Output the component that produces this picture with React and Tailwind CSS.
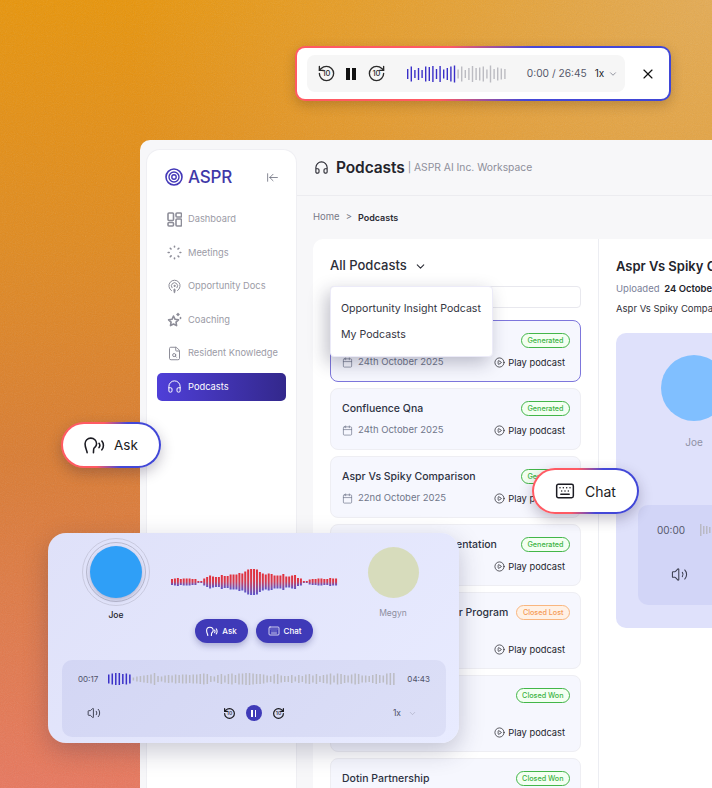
import React from "react";
import { Headphones, Calendar, CirclePlay, Volume2, Keyboard, ChevronDown, X, Podcast, FileSearch, ArrowLeftToLine } from "lucide-react";

function Skip({ size = 20, fwd = false, className = "", sw = 1.7 }) {
  return (
    <svg width={size} height={size} viewBox="0 0 24 24" fill="none" stroke="currentColor" strokeWidth={sw} strokeLinecap="round" strokeLinejoin="round" className={className}>
      <g transform={fwd ? "translate(24 0) scale(-1 1)" : undefined}>
        <path d="M3 12a9 9 0 1 0 9-9 9.75 9.75 0 0 0-6.74 2.74L3 8" />
        <path d="M3 3v5h5" />
      </g>
      <text x="12" y="15.5" textAnchor="middle" fontSize="9.500" fontWeight="500" fontFamily="Inter, sans-serif" fill="currentColor" stroke="none">10</text>
    </svg>
  );
}

function Bars({ heights, pitch, barW = 1.5, played = 0, playedColor = "#3a30c8", color = "#bcbcc2", h, fill }) {
  const w = heights.length * pitch;
  return (
    <svg width={w} height={h} viewBox={`0 0 ${w} ${h}`} className="block shrink-0">
      <defs>
        <linearGradient id="redblue" x1="0" y1="0" x2="0" y2="1">
          <stop offset="0" stopColor="#e2303c" />
          <stop offset="0.45" stopColor="#d83a4c" />
          <stop offset="1" stopColor="#5a56cc" />
        </linearGradient>
      </defs>
      {heights.map((v, i) => (
        <rect key={i} x={i * pitch} y={(h - v) / 2} width={barW} height={v} fill={fill || (i < played ? playedColor : color)} />
      ))}
    </svg>
  );
}

const DashIcon = (p) => (
  <svg width="15" height="15" viewBox="0 0 15 15" fill="none" stroke="currentColor" strokeWidth="1.300" {...p}>
    <rect x="1" y="1" width="5.500" height="7.500" rx="1" />
    <rect x="9" y="1" width="5.500" height="4" rx="1" />
    <rect x="1" y="10.500" width="5.500" height="3.500" rx="1" />
    <rect x="9" y="7" width="5.500" height="7" rx="1" />
  </svg>
);
const MeetIcon = (p) => (
  <svg width="15" height="15" viewBox="0 0 15 15" fill="none" stroke="currentColor" strokeWidth="1.700" strokeLinecap="round" {...p}>
    <path d="M7.500 1.200v.8M7.500 13v.8M1.200 7.500h1M13 7.500h.8M3.300 3.300l.7.7M11.100 11.100l.7.700M3.300 11.700l.8-.8M11 4l.8-.7" />
  </svg>
);
const CoachIcon = (p) => (
  <svg width="15" height="15" viewBox="0 0 15 15" fill="none" stroke="currentColor" strokeWidth="1.200" strokeLinejoin="round" strokeLinecap="round" {...p}>
    <path d="M6.500 4l1.600 3.300 3.400.5-2.500 2.400.6 3.400-3.100-1.600-3 1.600.6-3.400L1.600 7.800 5 7.300z" />
    <path d="M11 1.500v2M10 2.500h2M13.500 5.500v1" />
  </svg>
);

const HeadWave = ({ size = 20, sw = 1.500 }) => (
  <svg width={size} height={size * 0.85} viewBox="0 0 20 17" fill="none" stroke="currentColor" strokeWidth={sw} strokeLinecap="round" strokeLinejoin="round">
    <path d="M3 16c0-2.500-2-4-2-8.500a5.500 5.500 0 0 1 11 0c0 2.500-1.500 3-2.400 4-.7.800-.4 2.500-.6 4.500" />
    <path d="M14.300 7c.5.600.8 1.200.8 2s-.3 1.400-.8 2" />
    <path d="M17 4.800c1 1.200 1.500 2.600 1.500 4.200s-.5 3-1.500 4.200" />
  </svg>
);

const topWave = [10, 15, 8, 12, 8, 15, 14, 16, 10, 16, 9, 12, 15, 17, 9, 15, 8, 12, 16, 12, 13, 15, 9, 17, 10, 13, 11, 10];
const midWave = [6, 7, 8, 6, 7, 7, 7, 6, 6, 2, 2, 7, 10, 13, 11, 10, 10, 14, 12, 12, 15, 15, 15, 18, 17, 21, 25, 26, 26, 25, 20, 17, 15, 17, 16, 13, 13, 13, 16, 11, 11, 13, 14, 8, 7, 2, 2, 5, 6, 6, 7, 7, 6, 6, 8, 7, 7];
const lowWave = [9, 11, 12, 12, 10, 11, 9, 3, 5, 6, 7, 8, 9, 12, 6, 5, 7, 8, 7, 9, 8, 9, 9, 8, 9, 9, 10, 11, 10, 6, 5, 8, 10, 7, 10, 11, 8, 11, 11, 12, 12, 11, 10, 10, 9, 7, 6, 9, 10, 7, 6, 6, 8, 5, 8, 6, 9, 10, 7, 10, 6, 8, 9, 11, 7, 11, 10, 8, 7, 9, 11, 10, 7, 7, 6, 8, 10, 8, 7, 11, 12, 12];

function GradientFrame({ className = "", innerClassName = "", children }) {
  return (
    <div className={`p-[2px] bg-[linear-gradient(100deg,#ff5a63_0%,#ff5a63_40%,#4548d8_62%,#3f46d6_100%)] ${className}`}>
      <div className={`h-full bg-white ${innerClassName}`}>{children}</div>
    </div>
  );
}

function NavItem({ icon: Icon, label, active }) {
  return (
    <div className={`flex items-center h-[28px] px-[10px] gap-[6px] rounded-[5px] text-[9.3px] whitespace-nowrap ${active ? "bg-[linear-gradient(90deg,#4f3fd8,#33288c)] text-white" : "text-[#9b9ba6]"}`}>
      <Icon size={15} strokeWidth={1.6} className={`shrink-0 ${active ? "text-white" : "text-[#8d8d98]"}`} />
      <span>{label}</span>
    </div>
  );
}

function Badge({ label, tone }) {
  const tones = {
    green: "border-[#43b649] bg-[#f3fff2] text-[#3bb342]",
    orange: "border-[#f9b67f] bg-[#fff1e5] text-[#f59a55]",
  };
  return (
    <span className={`flex items-center justify-center h-[15px] px-[5.5px] rounded-full border text-[7.2px] leading-none font-medium whitespace-nowrap ${tones[tone]}`}>
      {label}
    </span>
  );
}

function PodcastCard({ title, date, badge = "Generated", tone = "green", tall, selected }) {
  return (
    <div className={`relative shrink-0 pl-[11px] pr-[10px] pt-[12px] rounded-[8px] bg-[#f6f7fe] ${tall ? "h-[77px]" : "h-[62px]"} ${selected ? "border border-[#7d76dc]" : "border border-[#eeeef3]"}`}>
      <div className="flex items-center justify-between h-[15px]">
        <span className="text-[10.5px] font-medium text-[#2d3242] whitespace-nowrap">{title}</span>
        <Badge label={badge} tone={tone} />
      </div>
      <div className={`flex justify-between ${tall ? "mt-[22px]" : "mt-[7px]"}`}>
        <div className="flex items-center gap-[5px] text-[9.5px] text-[#70768a] h-[15px] whitespace-nowrap">
          {date && <Calendar size={11} strokeWidth={1.5} />}
          {date && <span>{date}</span>}
        </div>
        <div className="flex items-center gap-[3px] text-[9.3px] text-[#23242b] mr-[5px] whitespace-nowrap">
          <CirclePlay size={11} strokeWidth={1.6} />
          <span>Play podcast</span>
        </div>
      </div>
    </div>
  );
}

export default function App() {
  return (
    <div className="relative w-[712px] h-[788px] overflow-hidden pl-[140px] pt-[140px] [font-family:Inter,sans-serif] bg-[radial-gradient(circle_at_100%_0%,#e4ab54_0%,rgba(228,171,84,0)_55%),linear-gradient(180deg,#e8950a_0%,#e08a20_32%,#da7c32_58%,#e07a48_78%,#e8775e_100%)]">
      <svg className="absolute inset-0 opacity-[0.14] pointer-events-none" width="712" height="788">
        <filter id="grain"><feTurbulence type="fractalNoise" baseFrequency="0.9" numOctaves="2" /><feColorMatrix type="saturate" values="0" /></filter>
        <rect width="712" height="788" filter="url(#grain)" />
      </svg>

      {/* App window */}
      <div className="relative flex w-[572px] h-[648px] rounded-tl-[10px] bg-[#f7f7f9] overflow-hidden">
        <aside className="ml-[6px] mt-[9px] w-[151px] shrink-0 bg-white rounded-t-[14px] border border-[#efeff3] border-b-0 pl-[10px] pr-[10px]">
          <div className="flex items-center justify-between pl-[8px] pr-[7px] mt-[17px] h-[20px]">
            <div className="flex items-center gap-[5px]">
              <svg width="18" height="18" viewBox="0 0 18 18" fill="none" stroke="#4338b8">
                <circle cx="9" cy="9" r="8" strokeWidth="1.6" />
                <circle cx="9" cy="9" r="5" strokeWidth="1.4" />
                <circle cx="9" cy="9" r="2.2" strokeWidth="1.4" />
              </svg>
              <span className="text-[17px] font-medium text-[#3f38a8] leading-none tracking-[-0.2px]">ASPR</span>
            </div>
            <ArrowLeftToLine size={13} strokeWidth={1.3} className="text-[#55586a]" />
          </div>
          <nav className="mt-[18px] flex flex-col gap-[5.6px]">
            <NavItem icon={DashIcon} label="Dashboard" />
            <NavItem icon={MeetIcon} label="Meetings" />
            <NavItem icon={Podcast} label="Opportunity Docs" />
            <NavItem icon={CoachIcon} label="Coaching" />
            <NavItem icon={FileSearch} label="Resident Knowledge" />
            <NavItem icon={Headphones} label="Podcasts" active />
          </nav>
        </aside>

        <main className="flex-1 min-w-0 flex flex-col">
          <header className="h-[56px] shrink-0 flex items-center pl-[17px] border-b border-[#ececf0] whitespace-nowrap">
            <Headphones size={15} strokeWidth={1.8} className="text-[#2a2a33]" />
            <span className="ml-[7px] text-[15.5px] font-semibold text-[#24242c] tracking-[-0.1px]">Podcasts</span>
            <span className="ml-[3px] text-[10.3px] text-[#8e8f9b]">| ASPR AI Inc. Workspace</span>
          </header>
          <div className="mt-[16px] pl-[16px] h-[11px] flex items-center gap-[6px] text-[9.5px] text-[#777a88] whitespace-nowrap">
            <span>Home</span>
            <span>&gt;</span>
            <span className="font-semibold text-[9px] text-[#2b2c35]">Podcasts</span>
          </div>
          <div className="mt-[16px] ml-[16px] flex flex-1 min-h-0 bg-white rounded-tl-[10px]">
            <section className="w-[286px] shrink-0 pl-[17px] pr-[17px] border-r border-[#ecedf2] flex flex-col">
              <div className="mt-[18px] flex items-center gap-[7px] h-[18px]">
                <span className="text-[13px] font-medium text-[#2d2e38]">All Podcasts</span>
                <ChevronDown size={13} strokeWidth={2} className="text-[#2d2e38]" />
              </div>
              <div className="mt-[11px] h-[22px] shrink-0 rounded-[4px] border border-[#e8e8ee]" />
              <div className="mt-[12px] flex flex-col gap-[6px]">
                <PodcastCard title="Ampliflex Renewal" date="24th October 2025" selected />
                <PodcastCard title="Confluence Qna" date="24th October 2025" />
                <PodcastCard title="Aspr Vs Spiky Comparison" date="22nd October 2025" />
                <PodcastCard title="Sales Ops Tool Implementation" />
                <PodcastCard title="Partner Referral Advisor Program" badge="Closed Lost" tone="orange" tall />
                <PodcastCard title="Enterprise Renewal" badge="Closed Won" tall />
                <PodcastCard title="Dotin Partnership" badge="Closed Won" tall />
              </div>
            </section>
            <section className="flex-1 min-w-0 pl-[17px] overflow-hidden whitespace-nowrap">
              <h2 className="mt-[18px] h-[18px] leading-[18px] text-[13px] font-semibold text-[#24242c]">Aspr Vs Spiky Comparison</h2>
              <div className="mt-[8px] text-[9.5px] h-[12px] leading-[12px] text-[#7b8199]">
                Uploaded <span className="ml-[2px] font-semibold text-[#24242c]">24 October 2025</span>
              </div>
              <div className="mt-[8px] text-[9.5px] h-[12px] leading-[12px] text-[#30313a]">Aspr Vs Spiky Comparison Podcast</div>
              <div className="mt-[18px] w-[300px] h-[295px] rounded-[10px] bg-[#dfe1fb] pl-[22px] pt-[22px]">
                <div className="w-[112px] flex flex-col items-center">
                  <div className="w-[66px] h-[66px] rounded-full bg-[#80bfff]" />
                  <span className="mt-[14px] text-[10px] text-[#8f91a5]">Joe</span>
                </div>
                <div className="mt-[55px] h-[100px] rounded-l-[10px] bg-[#d2d5f7] pl-[19px] pt-[18px]">
                  <div className="flex items-center gap-[15px] h-[14px]">
                    <span className="text-[10px] text-[#55586c]">00:00</span>
                    <Bars heights={[12, 8, 8, 6, 8]} pitch={3} color="#b9b9c4" h={14} />
                  </div>
                  <Volume2 size={17} strokeWidth={1.5} className="mt-[29px] ml-[14px] text-[#3c3e50]" />
                </div>
              </div>
            </section>
          </div>
        </main>
      </div>

      {/* Dropdown */}
      <div className="absolute left-[330px] top-[286px] w-[163px] h-[71px] rounded-[4px] bg-white border border-[#ecebf8] shadow-[-4px_6px_18px_rgba(30,30,60,0.28)] pl-[10px] pt-[15px] text-[10.6px] text-[#34353f] whitespace-nowrap">
        <div className="h-[14px] leading-[14px]">Opportunity Insight Podcast</div>
        <div className="mt-[12px] h-[14px] leading-[14px]">My Podcasts</div>
      </div>

      {/* Top mini player */}
      <GradientFrame className="absolute left-[295px] top-[46px] w-[376px] h-[55px] rounded-[10px] shadow-[0_4px_12px_rgba(60,40,20,0.25)]" innerClassName="rounded-[8px] pl-[10px] pr-[13px] flex items-center">
        <div className="w-[319px] h-[37px] rounded-[8px] bg-[#f6f6f6] flex items-center pl-[10px]">
          <Skip size={19} className="text-[#2a2a2a]" />
          <div className="ml-[10px] flex gap-[2px]"><div className="w-[4px] h-[12px] bg-[#111]" /><div className="w-[4px] h-[12px] bg-[#111]" /></div>
          <Skip size={19} fwd className="ml-[11px] text-[#2a2a2a]" />
          <div className="ml-[21px]">
            <Bars heights={topWave} pitch={3.6} barW={1.4} played={14} h={18} />
          </div>
          <span className="ml-[19px] text-[10.2px] text-[#55586a] whitespace-nowrap">0:00 / 26:45</span>
          <span className="ml-[8px] text-[10px] text-[#23242b]">1x</span>
          <ChevronDown size={10} strokeWidth={1.5} className="ml-[4px] text-[#55586a]" />
        </div>
        <X size={16} strokeWidth={1.7} className="ml-[15px] text-[#111]" />
      </GradientFrame>

      {/* Ask pill */}
      <GradientFrame className="absolute left-[61px] top-[422px] w-[100px] h-[46px] rounded-full shadow-[0_5px_14px_rgba(40,30,60,0.28)]" innerClassName="rounded-full flex items-center pl-[21px] text-[#1b1b22]">
        <HeadWave size={21} />
        <span className="ml-[9px] text-[13.5px]">Ask</span>
      </GradientFrame>

      {/* Chat pill */}
      <GradientFrame className="absolute left-[532px] top-[468px] w-[107px] h-[46px] rounded-full shadow-[0_5px_14px_rgba(40,30,60,0.28)]" innerClassName="rounded-full flex items-center pl-[21px]">
        <Keyboard size={20} strokeWidth={1.8} className="text-[#1b1b22]" />
        <span className="ml-[10px] text-[14px] text-[#1b1b22]">Chat</span>
      </GradientFrame>

      {/* Floating player */}
      <div className="absolute left-[48px] top-[533px] w-[411px] h-[210px] rounded-[18px] bg-[linear-gradient(135deg,#dfe1f9,#e8ebff)] shadow-[0_8px_24px_rgba(40,40,80,0.25)] pl-[14px] pr-[13px]">
        <div className="flex h-[127px]">
          <div className="relative w-[108px] shrink-0 flex flex-col items-center">
            <div className="mt-[5px] w-[68px] h-[68px] rounded-full border border-[#c9cadf] flex items-center justify-center">
              <div className="w-[60px] h-[60px] rounded-full border border-[#b9bacf] flex items-center justify-center">
                <div className="w-[52px] h-[52px] rounded-full bg-[#2f9ff7] shadow-[0_2px_4px_rgba(40,40,80,0.25)]" />
              </div>
            </div>
            <span className="mt-[3px] text-[8.5px] font-medium text-[#24242c]">Joe</span>
          </div>
          <div className="flex-1 min-w-0 flex flex-col items-center">
            <div className="mt-[35px] h-[28px] ml-[1px]">
              <Bars heights={midWave} pitch={2.93} barW={2} h={28} fill="url(#redblue)" />
            </div>
            <div className="mt-[23px] flex gap-[8px] text-white text-[8px] font-medium">
              <div className="h-[24px] w-[53px] rounded-full bg-[#3f3ab8] flex items-center justify-center gap-[4px] shadow-[0_3px_6px_rgba(40,40,120,0.3)]">
                <HeadWave size={12} sw={1.800} />
                <span>Ask</span>
              </div>
              <div className="h-[24px] w-[57px] rounded-full bg-[#3f3ab8] flex items-center justify-center gap-[4px] shadow-[0_3px_6px_rgba(40,40,120,0.3)]">
                <Keyboard size={12} strokeWidth={1.5} />
                <span>Chat</span>
              </div>
            </div>
          </div>
          <div className="w-[108px] shrink-0 flex flex-col items-center pl-[2px]">
            <div className="mt-[14px] w-[51px] h-[51px] rounded-full bg-[#d7dcbc]" />
            <span className="mt-[9px] text-[8.5px] text-[#8e8f9f]">Megyn</span>
          </div>
        </div>
        <div className="h-[77px] rounded-[10px] bg-[linear-gradient(135deg,#d3d6f4,#dcdff7)] px-[16px]">
          <div className="flex items-center justify-between h-[38px] text-[8px] text-[#50536a]">
            <span>00:17</span>
            <Bars heights={lowWave} pitch={3.52} barW={1.5} played={7} h={14} />
            <span>04:43</span>
          </div>
          <div className="flex items-center justify-between h-[30px] pl-[9px] pr-[13px]">
            <Volume2 size={14} strokeWidth={1.5} className="text-[#2e3040]" />
            <div className="flex items-center gap-[10px] ml-[14px]">
              <Skip size={13} sw={2.200} className="text-[#17171c]" />
              <div className="w-[16px] h-[16px] rounded-full bg-[#3f3ab8] flex items-center justify-center">
                <div className="flex gap-[2px]"><div className="w-[1.500px] h-[7px] bg-white" /><div className="w-[1.500px] h-[7px] bg-white" /></div>
              </div>
              <Skip size={13} sw={2.200} fwd className="text-[#17171c]" />
            </div>
            <div className="flex items-center gap-[7px] text-[8.5px] text-[#50536a]">
              <span>1x</span>
              <ChevronDown size={9} strokeWidth={1.3} className="text-[#9a9cb0]" />
            </div>
          </div>
        </div>
      </div>
    </div>
  );
}
